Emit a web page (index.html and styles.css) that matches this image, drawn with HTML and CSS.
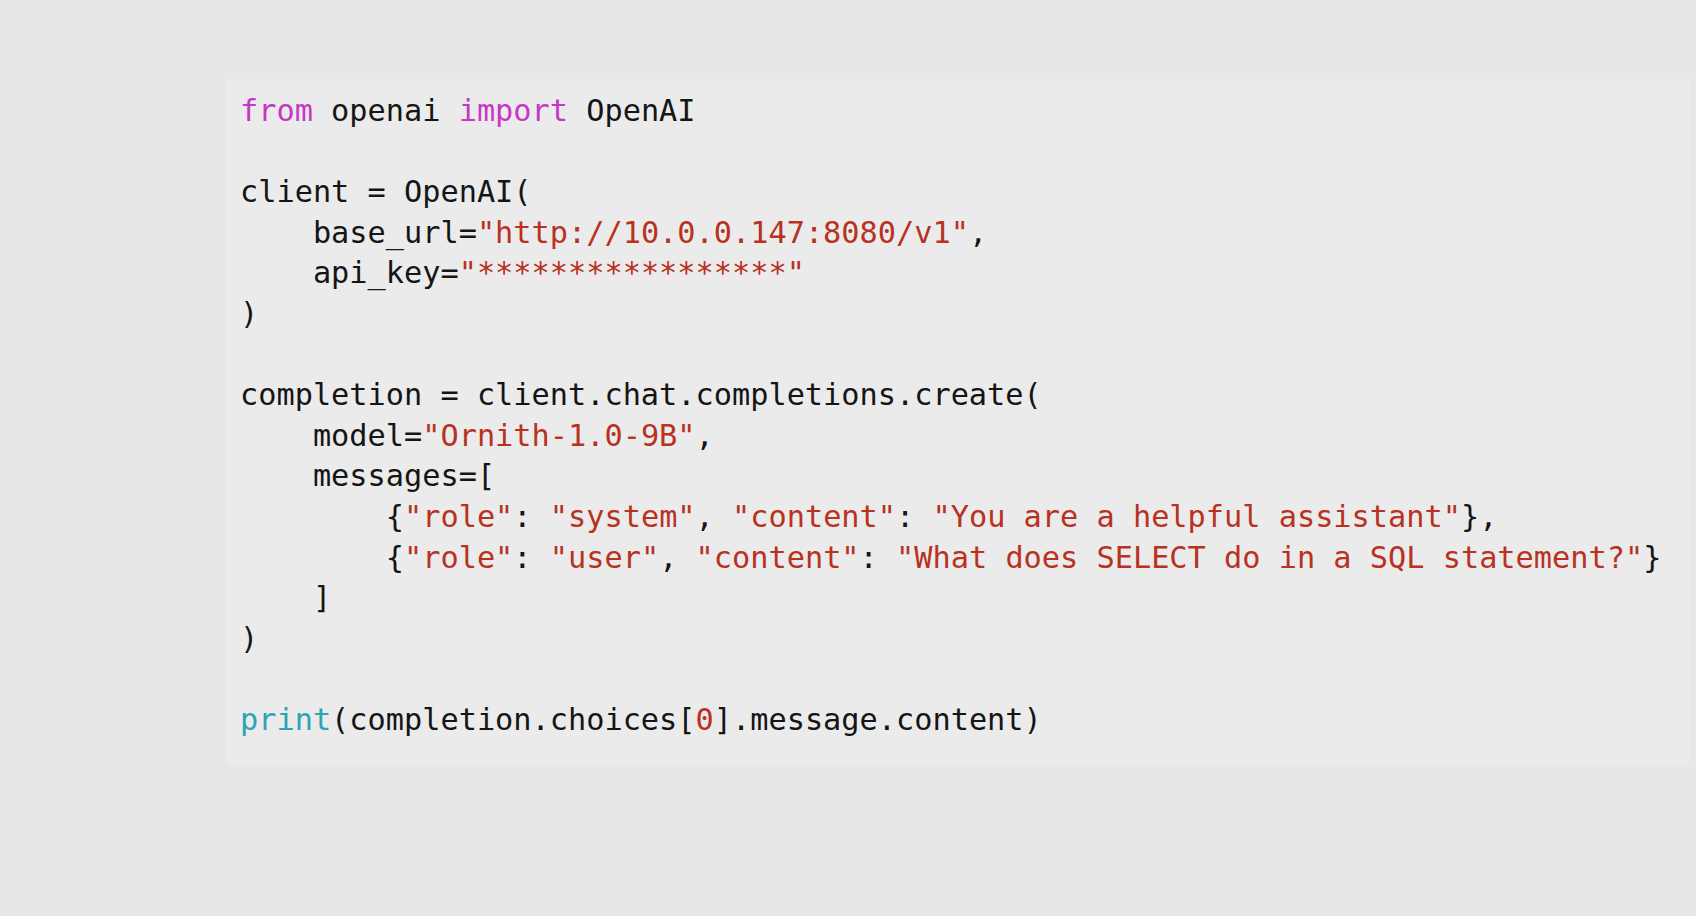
FILE: index.html
```html
<!DOCTYPE html>
<html>
<head>
<meta charset="utf-8">
<link rel="stylesheet" href="styles.css">
</head>
<body>
<main class="page">
<pre class="code"><span class="kw">from</span> openai <span class="kw">import</span> OpenAI

client = OpenAI(
    base_url=<span class="str">"http://10.0.0.147:8080/v1"</span>,
    api_key=<span class="str">"*****************"</span>
)

completion = client.chat.completions.create(
    model=<span class="str">"Ornith-1.0-9B"</span>,
    messages=[
        {<span class="str">"role"</span>: <span class="str">"system"</span>, <span class="str">"content"</span>: <span class="str">"You are a helpful assistant"</span>},
        {<span class="str">"role"</span>: <span class="str">"user"</span>, <span class="str">"content"</span>: <span class="str">"What does SELECT do in a SQL statement?"</span>}
    ]
)

<span class="fn">print</span>(completion.choices[<span class="str">0</span>].message.content)</pre>
</main>
</body>
</html>
```
FILE: styles.css
```css
html, body {
  margin: 0;
  padding: 0;
  background: #e7e7e7;
}
.page {
  padding: 79px 7px 151px 227px;
}
.code {
  margin: 0;
  background: #ebebeb;
  padding: 12px 0 24px 13px;
  font-family: "DejaVu Sans Mono", "Liberation Mono", monospace;
  font-size: 30.27px;
  line-height: 40.6px;
  color: #151515;
  white-space: pre;
  overflow: hidden;
}
.kw { color: #c637c6; }
.str { color: #b8321f; }
.fn { color: #2ea3b3; }
```
